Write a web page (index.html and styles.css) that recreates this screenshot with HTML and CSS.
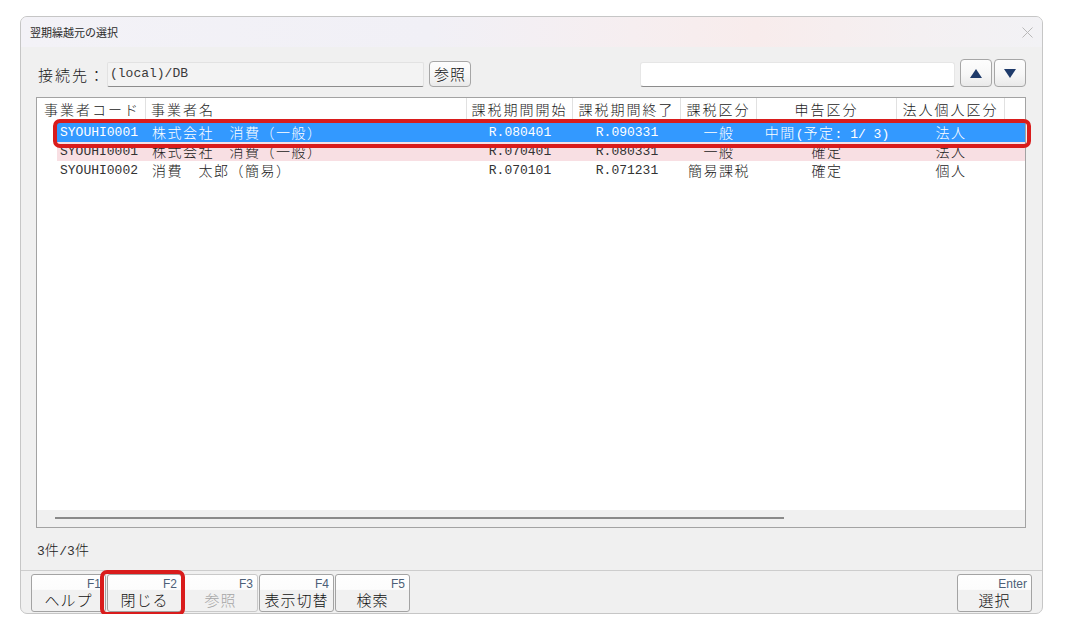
FILE: index.html
```html
<!DOCTYPE html>
<html lang="ja">
<head>
<meta charset="utf-8">
<title>翌期繰越元の選択</title>
<link rel="stylesheet" href="styles.css">
</head>
<body>
<div class="window">
  <div class="titlebar">
    <span class="title">翌期繰越元の選択</span>
    <svg class="close" width="11" height="11" viewBox="0 0 11 11"><path d="M0.5 0.5 L10.5 10.5 M10.5 0.5 L0.5 10.5" stroke="#b9b9b9" stroke-width="1" fill="none"/></svg>
  </div>

  <div class="content">
    <div class="conn-row">
      <span class="conn-label">接続先：</span>
      <div class="conn-field">(local)/DB</div>
      <button class="btn ref-btn">参照</button>
      <div class="spacer"></div>
      <div class="search-field"></div>
      <button class="btn arrow-btn" aria-label="上へ">
        <svg width="12" height="9" viewBox="0 0 12 9"><path d="M6 0 L12 9 L0 9 Z" fill="#1f3b6b"/></svg>
      </button>
      <button class="btn arrow-btn" aria-label="下へ">
        <svg width="12" height="9" viewBox="0 0 12 9"><path d="M0 0 L12 0 L6 9 Z" fill="#1f3b6b"/></svg>
      </button>
    </div>

    <div class="list">
      <div class="list-head">
        <div class="hcell left first">事業者コード</div>
        <div class="hcell left">事業者名</div>
        <div class="hcell">課税期間開始</div>
        <div class="hcell">課税期間終了</div>
        <div class="hcell">課税区分</div>
        <div class="hcell">申告区分</div>
        <div class="hcell">法人個人区分</div>
        <div class="hcell last"></div>
      </div>
      <div class="list-body">
        <div class="row selected">
          <div class="cell code">SYOUHI0001</div>
          <div class="cell name jp">株式会社　消費（一般）</div>
          <div class="cell mid">R.080401</div>
          <div class="cell mid">R.090331</div>
          <div class="cell mid jp">一般</div>
          <div class="cell mid"><span class="jp">中間</span>(<span class="jp">予定</span>: 1/ 3)</div>
          <div class="cell mid jp">法人</div>
        </div>
        <div class="row alt">
          <div class="cell code">SYOUHI0001</div>
          <div class="cell name jp">株式会社　消費（一般）</div>
          <div class="cell mid">R.070401</div>
          <div class="cell mid">R.080331</div>
          <div class="cell mid jp">一般</div>
          <div class="cell mid jp">確定</div>
          <div class="cell mid jp">法人</div>
        </div>
        <div class="row">
          <div class="cell code">SYOUHI0002</div>
          <div class="cell name jp">消費　太郎（簡易）</div>
          <div class="cell mid">R.070101</div>
          <div class="cell mid">R.071231</div>
          <div class="cell mid jp">簡易課税</div>
          <div class="cell mid jp">確定</div>
          <div class="cell mid jp">個人</div>
        </div>
      </div>
      <div class="hscroll"><div class="thumb"></div></div>
    </div>

    <div class="count">3<span class="jp">件</span>/3<span class="jp">件</span></div>
  </div>

  <div class="footer">
    <button class="fkey"><span class="key">F1</span><span class="label">ヘルプ</span></button>
    <button class="fkey"><span class="key">F2</span><span class="label">閉じる</span></button>
    <button class="fkey disabled"><span class="key">F3</span><span class="label">参照</span></button>
    <button class="fkey"><span class="key">F4</span><span class="label">表示切替</span></button>
    <button class="fkey"><span class="key">F5</span><span class="label">検索</span></button>
    <button class="fkey enter"><span class="key">Enter</span><span class="label">選択</span></button>
  </div>

  <div class="mark mark-row"></div>
  <div class="mark mark-f2"></div>
</div>
</body>
</html>
```

FILE: styles.css
```css
html, body {
  margin: 0;
  background: #ffffff;
}

body {
  font-family: "Noto Sans CJK JP", sans-serif;
  font-weight: 300;
  color: #1a1a1a;
}

button {
  font: inherit;
  color: inherit;
  margin: 0;
  padding: 0;
  cursor: default;
}

.jp {
  font-family: "Noto Sans CJK JP", sans-serif;
  font-weight: 300;
  letter-spacing: 1.5px;
}

/* dialog frame */
.window {
  position: relative;
  margin: 16px 0 0 20px;
  width: 1023px;
  height: 598px;
  box-sizing: border-box;
  border: 1px solid #c6c6c6;
  border-radius: 7px;
  background: #f0f0f0;
  display: flex;
  flex-direction: column;
}

.titlebar {
  height: 30px;
  flex: none;
  display: flex;
  align-items: center;
  justify-content: space-between;
  padding: 0 9px 0 9px;
  border-radius: 6px 6px 0 0;
  background: linear-gradient(90deg, #f3f2f7 0%, #f1f0f6 40%, #f6eef0 60%, #f8ecec 72%, #f4f0f2 88%, #f2f2f5 100%);
}

.title {
  font-size: 11px;
  font-weight: 400;
  color: #2a2a2a;
  line-height: 14px;
}

.close {
  display: block;
  margin-top: 1px;
}

/* main area */
.content {
  flex: 1;
  display: flex;
  flex-direction: column;
  padding: 13px 16px 0 15px;
}

.conn-row {
  display: flex;
  align-items: flex-end;
  height: 27px;
}

.conn-label {
  width: 69px;
  margin-left: 2px;
  font-size: 15px;
  letter-spacing: 2px;
  line-height: 24px;
  align-self: center;
  margin-top: 2px;
}

.conn-field {
  width: 317px;
  height: 25px;
  box-sizing: border-box;
  background: #f3f3f3;
  border: 1px solid #e2e2e2;
  border-bottom-color: #8c8c8c;
  border-radius: 2px;
  font-family: "Liberation Mono", monospace;
  font-weight: 400;
  font-size: 13px;
  line-height: 22px;
  padding-left: 2px;
  color: #3a3a3a;
}

.btn {
  box-sizing: border-box;
  border: 1px solid #a6a6a6;
  border-radius: 4px;
  background: linear-gradient(#fdfdfd 0%, #f7f7f7 55%, #e9e9e9 100%);
}

.ref-btn {
  margin-left: 5px;
  width: 42px;
  height: 26px;
  font-size: 15px;
  line-height: 22px;
  letter-spacing: 1px;
  color: #111;
}

.spacer {
  flex: 1;
}

.search-field {
  width: 315px;
  height: 25px;
  box-sizing: border-box;
  background: #ffffff;
  border: 1px solid #e6e6e6;
  border-bottom-color: #8c8c8c;
  border-radius: 3px;
}

.arrow-btn {
  width: 32px;
  height: 28px;
  margin-left: 5px;
  display: flex;
  align-items: center;
  justify-content: center;
}

.arrow-btn + .arrow-btn {
  margin-left: 2px;
}

.arrow-btn svg {
  display: block;
}

/* record list */
.list {
  margin-top: 10px;
  height: 431px;
  box-sizing: border-box;
  border: 1px solid #a3a3a3;
  background: #ffffff;
  display: flex;
  flex-direction: column;
}

.list-head {
  display: grid;
  grid-template-columns: 109px 321px 106px 108px 76px 140px 108px 1fr;
  height: 23px;
  flex: none;
}

.hcell {
  font-size: 14px;
  letter-spacing: 2px;
  line-height: 23px;
  text-align: center;
  border-right: 1px solid #e1e1e1;
  white-space: nowrap;
  overflow: hidden;
}

.hcell.left {
  text-align: left;
}

.hcell.first {
  padding-left: 7px;
}

.hcell.left:not(.first) {
  padding-left: 5px;
}

.hcell.last {
  border-right: none;
}

.list-body {
  flex: 1;
  padding-top: 2px;
}

.row {
  display: grid;
  grid-template-columns: 89px 321px 106px 108px 76px 140px 108px 1fr;
  height: 19px;
  margin-left: 20px;
  font-family: "Liberation Mono", "Noto Sans CJK JP", monospace;
  font-weight: 400;
  font-size: 13px;
  line-height: 19px;
  color: #333333;
}

.row .jp {
  color: #1a1a1a;
}

.row.selected,
.row.selected .jp {
  background: #3399ff;
  color: #ffffff;
}

.row.alt {
  background: #f8dfe3;
}

.cell {
  white-space: nowrap;
  overflow: hidden;
}

.cell.jp {
  font-size: 14px;
}

.cell .jp {
  font-size: 14px;
}

.cell.code {
  padding-left: 3px;
}

.cell.name {
  padding-left: 6px;
}

.cell.mid {
  text-align: center;
}

.hscroll {
  height: 17px;
  flex: none;
  background: #f0f0f0;
  position: relative;
}

.thumb {
  margin: 7px 0 0 18px;
  width: 729px;
  height: 2px;
  background: #8a8a8a;
}

.count {
  margin-top: 11px;
  margin-left: 1px;
  font-family: "Liberation Mono", monospace;
  font-weight: 400;
  font-size: 13px;
  line-height: 20px;
  color: #333333;
}

.count .jp {
  font-size: 14px;
  letter-spacing: 0.5px;
  color: #1a1a1a;
}

/* function key bar */
.footer {
  flex: none;
  border-top: 1px solid #cdcdcd;
  display: flex;
  gap: 1px;
  padding: 3px 10px 1px 10px;
  border-radius: 0 0 6px 6px;
}

.fkey {
  width: 75px;
  height: 38px;
  box-sizing: border-box;
  border: 1px solid #a3a3a3;
  border-radius: 3px;
  background: linear-gradient(#fefefe 0%, #fcfcfc 40%, #f1f1f1 42%, #f1f1f1 100%);
  display: flex;
  flex-direction: column;
}

.fkey .key {
  align-self: flex-end;
  padding-right: 4px;
  margin-top: 2px;
  font-family: "Liberation Sans", sans-serif;
  font-weight: 400;
  font-size: 12px;
  line-height: 14px;
  color: #4d5f77;
}

.fkey .label {
  text-align: center;
  font-size: 15px;
  letter-spacing: 1px;
  line-height: 18px;
  color: #111;
}

.fkey.disabled {
  border-color: #c9c9c9;
}

.fkey.disabled .label {
  color: #a6a6a6;
}

.fkey.enter {
  margin-left: auto;
}

/* red callouts */
.mark {
  position: absolute;
  box-sizing: border-box;
  border: 4px solid #d91c1c;
  border-radius: 7px;
  pointer-events: none;
}

.mark-row {
  left: 32px;
  top: 102px;
  width: 978px;
  height: 29px;
}

.mark-f2 {
  left: 79px;
  top: 553px;
  width: 85px;
  height: 46px;
}
```
